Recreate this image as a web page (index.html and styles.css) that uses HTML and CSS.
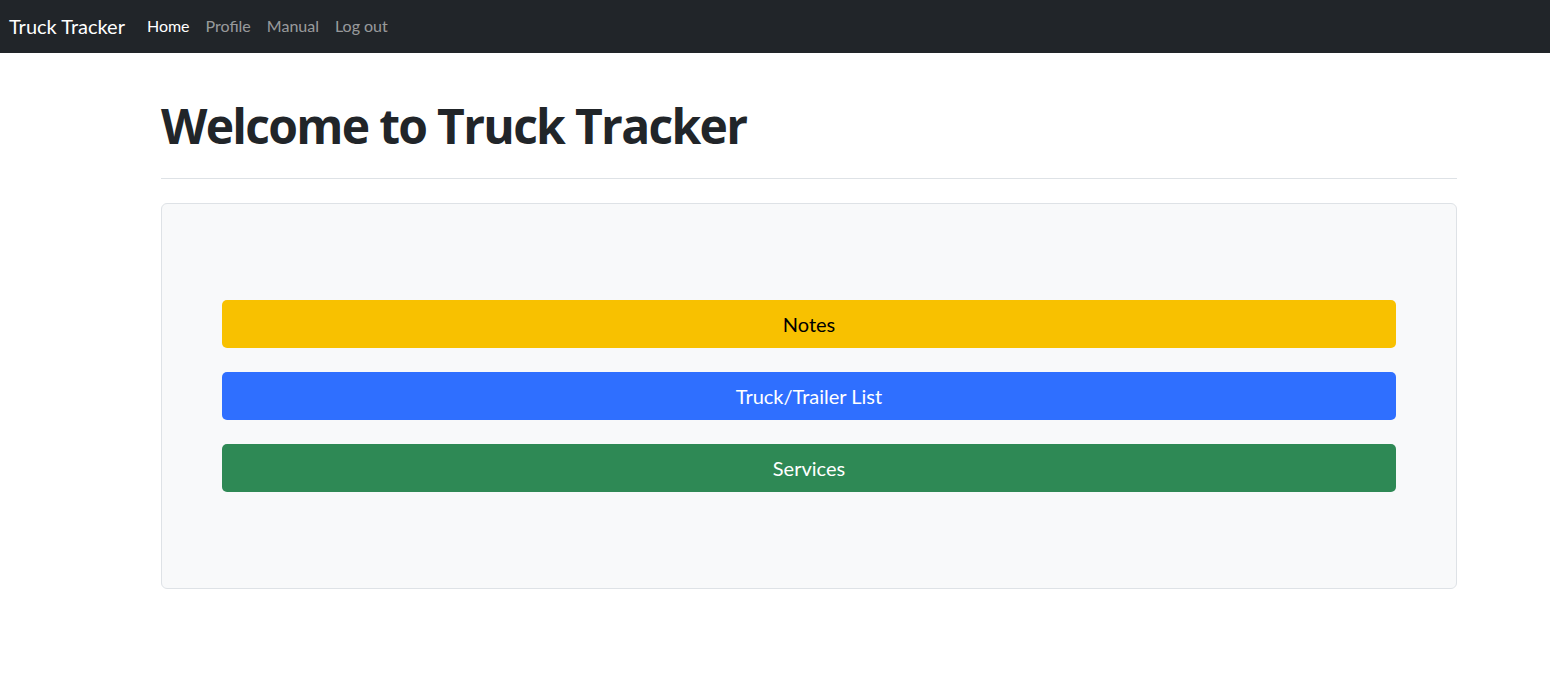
FILE: index.html
```html
<!DOCTYPE html>
<html lang="en">
<head>
<meta charset="utf-8">
<title>Truck Tracker</title>
<link rel="stylesheet" href="styles.css">
</head>
<body>
<nav class="navbar">
  <a class="brand" href="#">Truck Tracker</a>
  <ul class="nav-links">
    <li><a class="nav-link active" href="#">Home</a></li>
    <li><a class="nav-link" href="#">Profile</a></li>
    <li><a class="nav-link" href="#">Manual</a></li>
    <li><a class="nav-link" href="#">Log out</a></li>
  </ul>
</nav>
<main class="page">
  <h1 class="title">Welcome to Truck Tracker</h1>
  <hr class="divider">
  <section class="panel">
    <a class="btn btn-warning" href="#">Notes</a>
    <a class="btn btn-primary" href="#">Truck/Trailer List</a>
    <a class="btn btn-success" href="#">Services</a>
  </section>
</main>
</body>
</html>
```
FILE: styles.css
```css
* { box-sizing: border-box; }
html, body { margin: 0; padding: 0; }
body {
  font-family: "Lato", "Open Sans", "Liberation Sans", sans-serif;
  color: #212529;
  background: #fff;
  font-size: 16px;
}
a { text-decoration: none; }
.navbar {
  height: 53px;
  background: #212529;
  display: flex;
  align-items: center;
  padding: 0 0 2px 9px;
}
.brand {
  color: #fff;
  font-size: 20px;
  margin-right: 14px;
  line-height: 30px;
}
.nav-links {
  list-style: none;
  margin: 0;
  padding: 0;
  display: flex;
}
.nav-link {
  display: block;
  padding: 8px 8px;
  color: rgba(255,255,255,0.55);
  font-size: 16px;
  line-height: 24px;
}
.nav-link.active { color: #fff; }
.page {
  padding: 44px 93px 0 161px;
}
.title {
  margin: 0;
  font-family: "Open Sans", "Lato", sans-serif;
  font-size: 48px;
  font-weight: 700;
  line-height: 58px;
  letter-spacing: -1.7px;
  color: #212529;
}
.divider {
  margin: 23px 0 24px;
  border: 0;
  border-top: 1px solid #dee2e6;
}
.panel {
  background: #f8f9fa;
  border: 1px solid #dee2e6;
  border-radius: 6px;
  padding: 96px 60px 96px;
  display: flex;
  flex-direction: column;
  gap: 24px;
}
.btn {
  display: flex;
  align-items: center;
  justify-content: center;
  height: 48px;
  border-radius: 5px;
  font-size: 20px;
  color: #fff;
}
.btn-warning { background: #f8c100; color: #000; }
.btn-primary { background: #2f6fff; }
.btn-success { background: #2e8955; }
```
